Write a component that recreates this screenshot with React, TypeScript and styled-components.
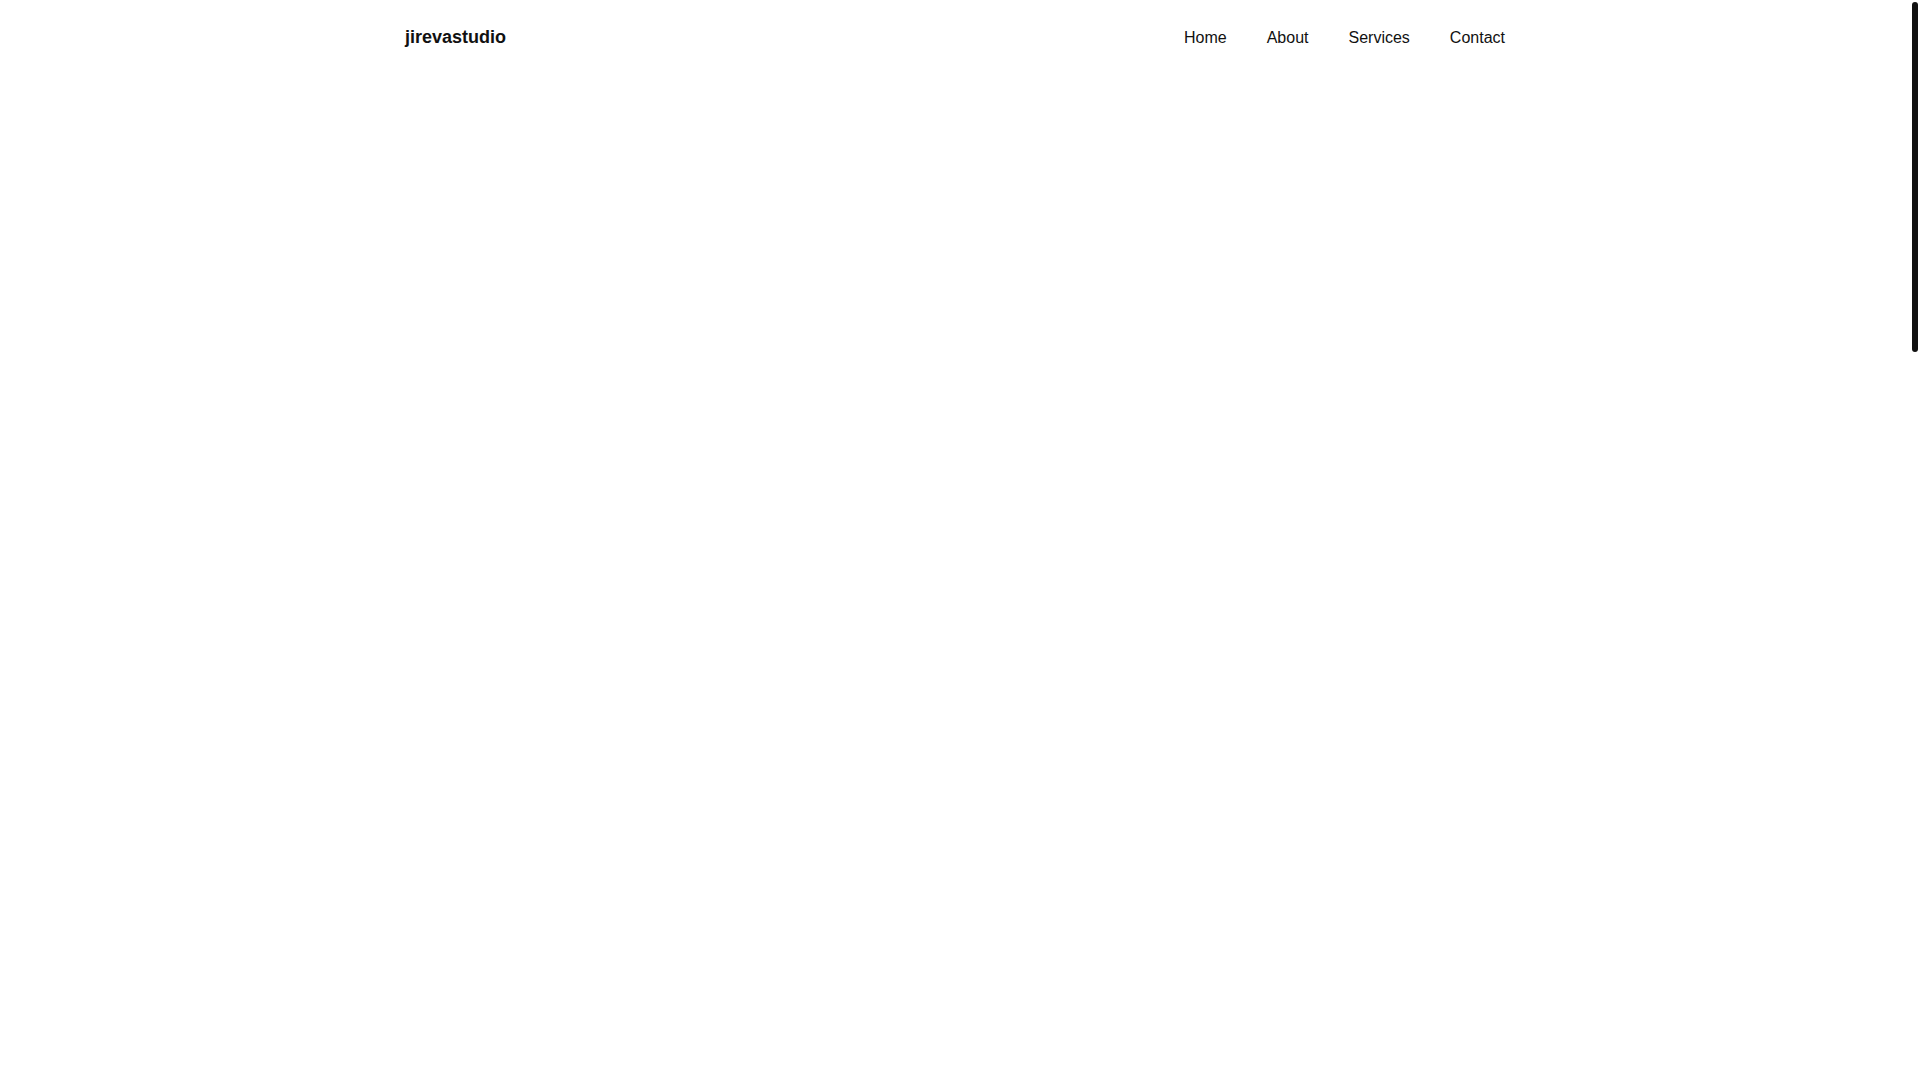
import React from 'react';
import styled, { createGlobalStyle } from 'styled-components';

const GlobalStyle = createGlobalStyle`
  html,
  body {
    margin: 0;
    height: 100%;
    overflow: hidden;
  }

  body {
    background: #fff;
    color: #111;
    font-family: "Liberation Sans", Arial, sans-serif;
  }

  * {
    box-sizing: border-box;
  }
`;

const App: React.FC = () => {
  return (
    <>
      <GlobalStyle />
      <Page>
        <Header>
          <HeaderInner>
            <Logo href="#">jirevastudio</Logo>
            <Nav>
              <NavLink href="#">Home</NavLink>
              <NavLink href="#">About</NavLink>
              <NavLink href="#">Services</NavLink>
              <NavLink href="#">Contact</NavLink>
            </Nav>
          </HeaderInner>
        </Header>
        <Main />
      </Page>
      {/* the page's scrollbar thumb, drawn since the browser hides it */}
      <ScrollThumb />
    </>
  );
};

const Page = styled.div`
  height: 100vh;
  padding-right: 10px;
  background: #fff;
`;

const ScrollThumb = styled.div`
  position: fixed;
  top: 2px;
  right: 2px;
  width: 6px;
  height: 350px;
  border-radius: 3px;
  background: #111;
`;

const Header = styled.header`
  background: #fff;
  padding: 27px 0;
`;

const HeaderInner = styled.div`
  max-width: 1100px;
  margin: 0 auto;
  display: flex;
  align-items: center;
  justify-content: space-between;
`;

const Logo = styled.a`
  font-size: 18px;
  font-weight: 700;
  color: #111;
  text-decoration: none;
`;

const Nav = styled.nav`
  display: flex;
  align-items: center;
  gap: 40px;
`;

const NavLink = styled.a`
  font-size: 16px;
  color: #111;
  text-decoration: none;
`;

const Main = styled.main`
  flex: 1;
`;

export default App;
